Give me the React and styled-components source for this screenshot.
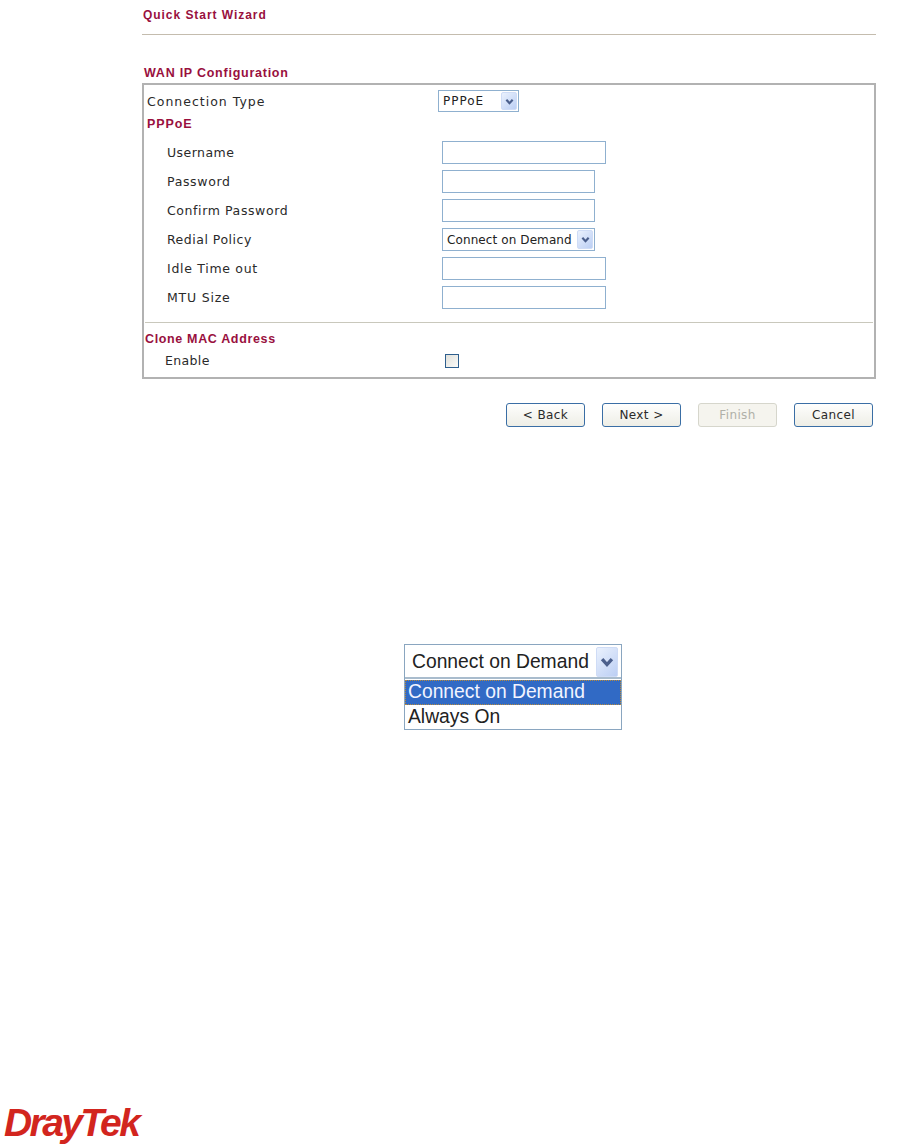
import React from "react";
import styled, { createGlobalStyle } from "styled-components";

const Global = createGlobalStyle`
  html, body { margin: 0; padding: 0; background: #fff; overflow: hidden; }
  * { box-sizing: border-box; }
`;

const Page = styled.div`
  width: 903px;
  height: 1145px;
  display: flex;
  flex-direction: column;
  font-family: "DejaVu Sans", sans-serif;
  color: #222;
`;

const Wizard = styled.div`
  margin: 0 27px 0 142px;
`;

const Title = styled.div`
  height: 35px;
  padding: 8px 0 0 1px;
  border-bottom: 1px solid #c4bcae;
  font: bold 12px/14px "Liberation Sans", sans-serif;
  color: #99103e;
  letter-spacing: 0.95px;
`;

const SectionLabel = styled.div`
  margin: 31px 0 3px 2px;
  height: 14px;
  font: bold 12.5px/14px "Liberation Sans", sans-serif;
  color: #99103e;
  letter-spacing: 0.75px;
`;

const Panel = styled.div`
  height: 296px;
  border: 2px solid #b2b2b2;
  padding-top: 5px;
`;

const Row = styled.div`
  display: grid;
  grid-template-columns: ${(p) => p.$label}px 1fr;
  align-items: center;
  height: ${(p) => p.$h || 29}px;
  padding-left: ${(p) => p.$indent || 0}px;
`;

const Label = styled.span`
  font-size: 12.5px;
  letter-spacing: ${(p) => p.$ls || 0.65}px;
  color: #2a2a2a;
  white-space: nowrap;
`;

const Sub = styled.div`
  height: ${(p) => p.$h}px;
  margin-left: ${(p) => p.$left}px;
  font: bold 12.5px/${(p) => p.$h}px "Liberation Sans", sans-serif;
  color: #99103e;
  letter-spacing: ${(p) => p.$ls}px;
`;

const Input = styled.div`
  width: ${(p) => p.$w}px;
  height: 23px;
  border: 1px solid #8fb0cf;
  background: #fff;
`;

const Select = styled.div`
  display: flex;
  align-items: center;
  justify-content: space-between;
  width: ${(p) => p.$w}px;
  height: ${(p) => p.$h || 23}px;
  border: 1px solid #8fb0cf;
  padding: 1px 1px 1px 4px;
  font-size: 12px;
  letter-spacing: ${(p) => p.$ls || 0}px;
  color: #222;
  background: #fff;
`;

const Arrow = styled.span`
  display: flex;
  align-items: center;
  justify-content: center;
  width: ${(p) => p.$w || 16}px;
  height: 100%;
  border-radius: 2px;
  border: 1px solid #cfdcf6;
  background: linear-gradient(135deg, #eaf1fd, #bccff4);
`;

const Chevron = ({ size = 9 }) => (
  <svg width={size} height={size} viewBox="0 0 10 10">
    <path d="M1.5 3 L5 6.8 L8.5 3" fill="none" stroke="#4b5f8c" strokeWidth="2.4" />
  </svg>
);

const Rule = styled.div`
  margin: 10px 1px 2px 1px;
  border-top: 1px solid #c9c8bc;
`;

const Check = styled.span`
  display: block;
  width: 14px;
  height: 14px;
  margin-left: 3px;
  border: 1px solid #2e5f8e;
  background: linear-gradient(135deg, #e0e0da, #fbfbf9);
`;

const Actions = styled.div`
  display: flex;
  justify-content: flex-end;
  gap: 17px;
  margin: 24px 3px 0 0;
`;

const Button = styled.div`
  display: flex;
  align-items: center;
  justify-content: center;
  width: 79px;
  height: 24px;
  border: 1px solid ${(p) => (p.$off ? "#d6d6cc" : "#3a6ea5")};
  border-radius: 3px;
  background: ${(p) => (p.$off ? "#f5f4ee" : "linear-gradient(#fefefd, #eeeee6)")};
  color: ${(p) => (p.$off ? "#b0b0a8" : "#2a2a2a")};
  font-size: 12px;
  letter-spacing: 0.4px;
`;

const Zoomed = styled.div`
  width: 218px;
  margin: 217px 0 0 404px;
  border: 1px solid #8aa6c0;
  font: 19.3px "Liberation Sans", sans-serif;
  color: #222;
`;

const ZoomHead = styled.div`
  display: flex;
  align-items: center;
  justify-content: space-between;
  height: 34px;
  margin-bottom: 1px;
  padding: 2px 3px 0 7px;
  border-bottom: 2px solid #a9bccd;
`;

const Option = styled.div`
  height: 24.5px;
  padding-left: 3px;
  line-height: 24px;
  white-space: nowrap;
  background: ${(p) => (p.$on ? "#316ac5" : "#fff")};
  color: ${(p) => (p.$on ? "#f2f4ff" : "#222")};
  outline: ${(p) => (p.$on ? "1px dotted #b98a3a" : "none")};
  outline-offset: -1px;
`;

const Logo = styled.div`
  margin-top: auto;
  padding-left: 4px;
  height: 42px;
  font: italic bold 39px/40px "Liberation Sans", sans-serif;
  letter-spacing: -2.6px;
  color: #d2251e;
`;

export default function App() {
  return (
    <Page>
      <Global />
      <Wizard>
        <Title>Quick Start Wizard</Title>
        <SectionLabel>WAN IP Configuration</SectionLabel>
        <Panel>
          <Row $label={291} $h={21} $indent={3}>
            <Label $ls={1}>Connection Type</Label>
            <Select $w={81} $h={22} $ls={1}>
              PPPoE
              <Arrow><Chevron /></Arrow>
            </Select>
          </Row>
          <Sub $h={27} $left={3} $ls={0.9}>PPPoE</Sub>
          <Row $label={275} $indent={23}>
            <Label $ls={0.45}>Username</Label>
            <Input $w={164} />
          </Row>
          <Row $label={275} $indent={23}>
            <Label>Password</Label>
            <Input $w={153} />
          </Row>
          <Row $label={275} $indent={23}>
            <Label $ls={0.6}>Confirm Password</Label>
            <Input $w={153} />
          </Row>
          <Row $label={275} $indent={23}>
            <Label $ls={0.5}>Redial Policy</Label>
            <Select $w={153} $ls={0.1}>
              Connect on Demand
              <Arrow><Chevron /></Arrow>
            </Select>
          </Row>
          <Row $label={275} $indent={23}>
            <Label $ls={0.7}>Idle Time out</Label>
            <Input $w={164} />
          </Row>
          <Row $label={275} $indent={23}>
            <Label $ls={0.8}>MTU Size</Label>
            <Input $w={164} />
          </Row>
          <Rule />
          <Sub $h={28} $left={1} $ls={0.65}>Clone MAC Address</Sub>
          <Row $label={277} $indent={21} $h={14}>
            <Label $ls={0.35}>Enable</Label>
            <Check />
          </Row>
        </Panel>
        <Actions>
          <Button>&lt; Back</Button>
          <Button>Next &gt;</Button>
          <Button $off>Finish</Button>
          <Button>Cancel</Button>
        </Actions>
      </Wizard>
      <Zoomed>
        <ZoomHead>
          Connect on Demand
          <Arrow $w={22}><Chevron size={14} /></Arrow>
        </ZoomHead>
        <Option $on>Connect on Demand</Option>
        <Option>Always On</Option>
      </Zoomed>
      <Logo>DrayTek</Logo>
    </Page>
  );
}
